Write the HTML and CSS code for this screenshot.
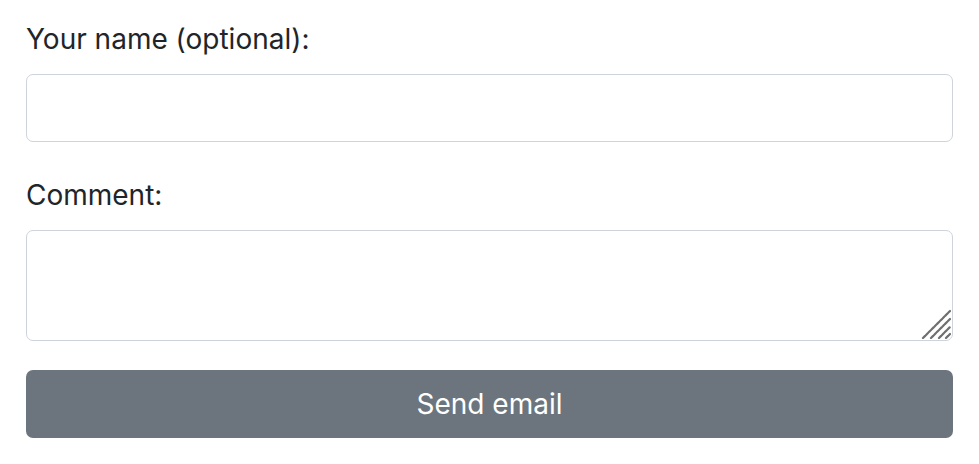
FILE: index.html
```html
<!DOCTYPE html>
<html lang="en">
<head>
  <meta charset="UTF-8">
  <meta name="viewport" content="width=device-width, initial-scale=1.0">
  <title>Send email</title>
  <link rel="stylesheet" href="styles.css">
</head>
<body>
  <form class="mail-form">
    <div class="form-group">
      <label for="name">Your name (optional):</label>
      <input type="text" id="name" class="form-control">
    </div>

    <div class="form-group">
      <label for="comment">Comment:</label>
      <div class="textarea-wrap">
        <textarea id="comment" class="form-control"></textarea>
        <!-- resize grip -->
        <svg class="grip" width="30" height="30" viewBox="0 0 30 30">
          <path d="M2 29 L29 2 M10 29 L29 10 M18 29 L29 18 M25 29 L29 25" stroke="#6f6f6f" stroke-width="2.2" stroke-linecap="round" stroke-dasharray="3 1"/>
        </svg>
      </div>
    </div>

    <button type="button" class="btn">Send email</button>
  </form>
</body>
</html>
```

FILE: styles.css
```css
body {
  margin: 0;
  padding: 18px 26px;
  background: #fff;
  color: #212529;
  font-family: Inter, "Liberation Sans", sans-serif;
}

.mail-form {
  display: flex;
  flex-direction: column;
}

.form-group {
  display: flex;
  flex-direction: column;
  margin-bottom: 32px;
}

.form-group:nth-child(2) {
  margin-bottom: 29px;
}

label {
  font-size: 28px;
  line-height: 42px;
  margin-bottom: 14px;
}

.form-control {
  box-sizing: border-box;
  width: 100%;
  margin: 0;
  border: 1px solid #ced4da;
  border-radius: 7px;
  background: #fff;
  font: inherit;
  font-size: 26px;
  padding: 10px 20px;
  display: block;
}

input.form-control {
  height: 68px;
}

.textarea-wrap {
  position: relative;
}

textarea.form-control {
  height: 111px;
  resize: none;
}

.grip {
  position: absolute;
  right: 2px;
  bottom: 2px;
}

.btn {
  height: 68px;
  border: none;
  border-radius: 7px;
  background: #6c757d;
  color: #fff;
  font: inherit;
  font-size: 28px;
  cursor: pointer;
}
```
